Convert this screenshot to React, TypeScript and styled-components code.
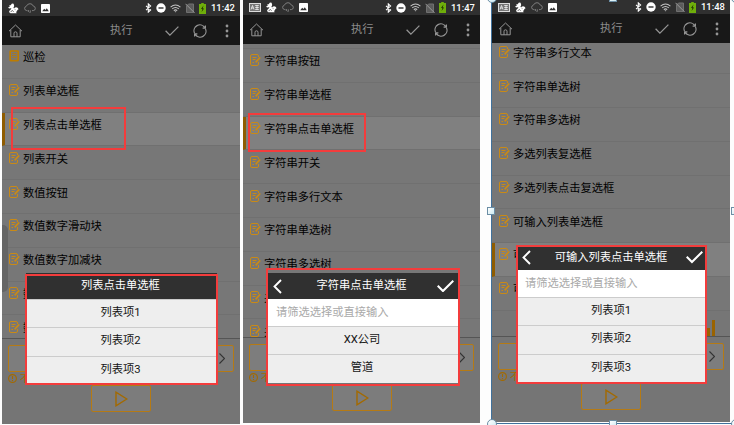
import React from "react";
import styled, { createGlobalStyle } from "styled-components";

const GlobalStyle = createGlobalStyle`
  * { box-sizing: border-box; }
  body {
    margin: 0;
    background: #fff;
    overflow: hidden;
    font-family: Roboto, "Noto Sans CJK SC", sans-serif;
    font-size: 11.25px;
  }
  svg { display: block; flex: none; }
`;

const Page = styled.main`
  position: relative;
  width: 734px;
  height: 425px;
  overflow: hidden;
  display: flex;
  align-items: flex-start;
  padding-left: 2px;
  background: #fdfdfd;
`;

const Phone = styled.section<{ $h: number; $w: number; $gap: number }>`
  position: relative;
  flex: none;
  width: ${(p) => p.$w}px;
  height: ${(p) => p.$h}px;
  margin-right: ${(p) => p.$gap}px;
  display: flex;
  flex-direction: column;
  background: #767676;
`;

const StatusBar = styled.header<{ $h: number }>`
  flex: none;
  height: ${(p) => p.$h}px;
  display: flex;
  align-items: center;
  justify-content: space-between;
  padding: 0 5px 0 6px;
  background: #303030;
  color: #fff;
`;

const Notices = styled.div`
  display: flex;
  align-items: center;
  gap: 5px;
`;

const Signals = styled.div`
  display: flex;
  align-items: center;
  gap: 4px;
`;

const Clock = styled.span`
  width: 24px;
  margin-left: 1px;
  font-size: 9.4px;
  font-weight: 500;
  line-height: 14px;
  white-space: nowrap;
`;

const AppBar = styled.nav<{ $h: number }>`
  flex: none;
  height: ${(p) => p.$h}px;
  display: grid;
  grid-template-columns: 108px 55px 28px 32px 10px;
  align-items: center;
  background: #181818;
  color: #959595;
`;

const HomeSlot = styled.div`
  padding-left: 6px;
`;

const BarTitle = styled.h1`
  margin: 0;
  color: #8c8c8c;
  font-size: 11.25px;
  font-weight: 400;
  line-height: 14px;
`;

const List = styled.div`
  flex: 1;
  min-height: 0;
  overflow: hidden;
`;

const Rows = styled.ul<{ $shift: number }>`
  list-style: none;
  margin: ${(p) => p.$shift}px 0 0;
  padding: 0;
`;

const Row = styled.li<{ $active?: boolean }>`
  height: 33.8px;
  display: flex;
  align-items: flex-start;
  gap: 3px;
  padding: 5.4px 0 0 ${(p) => (p.$active ? 4 : 7)}px;
  border-left: ${(p) => (p.$active ? "3px solid #8f5c00" : "0")};
  border-bottom: 1px solid #707070;
  background: ${(p) => (p.$active ? "#808080" : "#777")};
  color: #000;
  line-height: 16px;
  white-space: nowrap;
`;

const Footer = styled.footer`
  flex: none;
  height: 86px;
  border-top: 1px solid #555;
  padding: 6px 6px 0;
  background: #757575;
  color: #a36a00;
`;

const StepBox = styled.div`
  height: 27px;
  display: flex;
  align-items: center;
  justify-content: flex-end;
  padding-right: 8px;
  border: 1px solid #b57a14;
  border-radius: 2px;
  background: #7d7d7d;
  color: #333;
`;

const Hint = styled.div`
  height: 13px;
  display: flex;
  align-items: center;
  gap: 3px;
  font-size: 10px;
  line-height: 12px;
`;

const PlayButton = styled.button`
  width: 60px;
  height: 27px;
  margin: 0 0 0 83px;
  padding: 0;
  display: flex;
  align-items: center;
  justify-content: center;
  border: 1px solid #b57a14;
  border-radius: 2px;
  background: #7c7c7c;
  color: #a36a00;
`;

const Dialog = styled.div<{ $x: number; $y: number; $w: number }>`
  position: absolute;
  left: ${(p) => p.$x}px;
  top: ${(p) => p.$y}px;
  width: ${(p) => p.$w}px;
  background: #eee;
`;

const DialogHead = styled.div<{ $h: number; $filter?: boolean }>`
  height: ${(p) => p.$h}px;
  padding: ${(p) => (p.$filter ? "0 4px 0 5px" : "0 2px 0 0")};
  display: flex;
  align-items: center;
  background: #303030;
  color: #fff;
  line-height: 16px;
`;

const DialogTitle = styled.div<{ $nudge: number }>`
  flex: 1;
  padding-left: ${(p) => p.$nudge}px;
  text-align: center;
`;

const Filter = styled.div`
  height: 27px;
  padding: 0 8px;
  background: #fff;
  color: #a9a9a9;
  line-height: 27px;
`;

const Option = styled.div`
  height: 28.4px;
  padding-right: 2px;
  border-top: 1px solid #ccc;
  color: #151515;
  text-align: center;
  line-height: 26px;
`;

const Mark = styled.div<{ $x: number; $y: number; $w: number; $h: number }>`
  position: absolute;
  left: ${(p) => p.$x}px;
  top: ${(p) => p.$y}px;
  width: ${(p) => p.$w}px;
  height: ${(p) => p.$h}px;
  border: 2px solid #f33c3c;
`;

const Grip = styled.div`
  position: absolute;
  left: 0;
  top: 225px;
  width: 6px;
  height: 67px;
  border-radius: 0 5px 5px 0;
  background: #656565;
`;

const Bars = styled.svg`
  position: absolute;
  left: 213px;
  top: 320px;
`;

const SelectionEdge = styled.div<{ $side: "left" | "bottom" }>`
  position: absolute;
  background: #40719c;
  ${(p) =>
    p.$side === "left"
      ? "left: 491px; top: 0; width: 1px; height: 424px;"
      : "left: 491px; top: 423px; width: 243px; height: 1px;"}
`;

const Handle = styled.i<{ $x: number; $y: number; $round?: boolean }>`
  position: absolute;
  left: ${(p) => p.$x}px;
  top: ${(p) => p.$y}px;
  width: ${(p) => (p.$round ? 10 : 8)}px;
  height: ${(p) => (p.$round ? 10 : 8)}px;
  border: 1px solid #6c8ea5;
  border-radius: ${(p) => (p.$round ? "50%" : "0")};
  background: linear-gradient(135deg, #fff, #cdeaf1);
`;

const HomeIcon = () => (
  <svg width="15" height="14" viewBox="0 0 15 14" fill="none" stroke="currentColor" strokeWidth="1">
    <path d="M1 7.2 7.5 1 14 7.2M2.8 6v6.8h9.4V6M6 12.8V9.2q0-1.4 1.5-1.4T9 9.2v3.6" strokeLinejoin="round" />
  </svg>
);
const CheckIcon = ({ w = 14, s = 1.3 }: { w?: number; s?: number }) => (
  <svg width={w} height={(w * 10) / 14} viewBox="0 0 14 10" fill="none" stroke="currentColor" strokeWidth={s}>
    <path d="M.6 4.8 4.9 9.1 13.4.6" />
  </svg>
);
const RefreshIcon = () => (
  <svg width="14" height="14" viewBox="0 0 14 14" fill="none" stroke="currentColor" strokeWidth="1.2">
    <path d="M1.5 9A5.8 5.8 0 0 1 11.6 3.4M12.5 5A5.8 5.8 0 0 1 2.4 10.6M12.4 1.4v2.8H9.6M1.6 12.6V9.8h2.8" />
  </svg>
);
const DotsIcon = () => (
  <svg width="4" height="14" viewBox="0 0 4 14" fill="currentColor">
    <circle cx="2" cy="2" r="1.4" />
    <circle cx="2" cy="7" r="1.4" />
    <circle cx="2" cy="12" r="1.4" />
  </svg>
);
const EditIcon = () => (
  <svg width="11" height="12" viewBox="0 0 11 12" fill="none" stroke="#c98a16" strokeWidth="1">
    <path d="M8.5 3V2Q8.5.5 7 .5H2Q.5.5.5 2v8q0 1.5 1.5 1.5h5q1.5 0 1.5-1.5V8M2.5 3.5h4M2.5 5.5h3M2.5 8.5H4" />
    <path d="M5.6 8.4 10.2 3.4" strokeWidth="1.7" />
  </svg>
);
const FormIcon = () => (
  <svg width="11" height="12" viewBox="0 0 11 12" fill="none" stroke="#bd7c00">
    <rect x="1.2" y="1" width="8" height="9.6" rx=".5" strokeWidth="1.7" />
    <path d="M3 3.5h4.5M3 5.5h4.5M3 7.5h4.5" strokeWidth=".8" />
  </svg>
);
const TextNoticeIcon = () => (
  <svg width="12" height="9" viewBox="0 0 12 9">
    <rect x=".5" y=".5" width="11" height="8" fill="#777" stroke="#ddd" />
    <path d="M2 6.5 3.5 2.5 5 6.5M2.4 5h2M6.2 2.5h3.6M6.2 4.5h3.6M6.2 6.5h3.6M8 2.5v4" stroke="#fff" strokeWidth=".7" fill="none" />
  </svg>
);
const SquirrelIcon = () => (
  <svg width="11" height="11" viewBox="0 0 11 11" fill="#fff">
    <path d="M4 .5 5.6.8 6.2 3 5.4 5 6 5.2Q8 3.4 9.6 4.8L10.6 6.2 9.3 7 9 8.4 8 8.4 8.6 10.3H2.4Q.6 9.4 1.2 8L3.4 5.8 3 5.2 1 5.4.2 4.2 2 3.4 1 2.4 2.6 2.2Z" />
    <path d="M4.2 7.2 5.6 8.8M6.6 6.2l.8.4M2.6 8.6 4 8" stroke="#303030" strokeWidth=".7" fill="none" />
  </svg>
);
const CloudIcon = () => (
  <svg width="12" height="11" viewBox="0 0 12 11" fill="none" stroke="#858585" strokeWidth=".9">
    <path d="M3.5 7.6H2.8Q.6 7.3.6 5.3.7 3.6 2.4 3.2 3.3.7 6 .7q2.4 0 3.2 2.3 2.1.3 2.1 2.4 0 2-2 2.2H8M4.8 7l-.6 2M6.5 7.5 5.9 10" />
  </svg>
);
const ImageIcon = () => (
  <svg width="9" height="9" viewBox="0 0 9 9">
    <rect width="9" height="9" rx=".8" fill="#fff" />
    <path d="m1.2 7.3 2-2.6L4.5 6l1.3-1.8 2 3.1Z" fill="#303030" />
  </svg>
);
const BluetoothIcon = () => (
  <svg width="7" height="10" viewBox="0 0 7 10" fill="none" stroke="#fff" strokeWidth="1.1">
    <path d="m1 2.8 4.6 4.1L3.3 9.1V.9l2.3 2.2L1 7.2" />
  </svg>
);
const DndIcon = () => (
  <svg width="10" height="10" viewBox="0 0 10 10">
    <circle cx="5" cy="5" r="4.7" fill="#fff" />
    <path d="M2.5 5h5" stroke="#303030" strokeWidth="1.4" />
  </svg>
);
const WifiIcon = () => (
  <svg width="11" height="9" viewBox="0 0 11 9" fill="none" stroke="#c4c4c4" strokeWidth="1.1">
    <path d="M.6 3.1q4.9-4.2 9.8 0M2.2 4.9q3.3-2.8 6.6 0M3.8 6.6q1.7-1.4 3.4 0" />
    <path d="m4.5 7.3 1 1.2 1-1.2Z" fill="#bbb" stroke="none" />
  </svg>
);
const SimOffIcon = () => (
  <svg width="10" height="10" viewBox="0 0 10 10">
    <path d="M1.5 3 3.5 1h5v8.5h-7Z" fill="#5c5c5c" stroke="#707070" />
    <path d="m.5.8 9 9" stroke="#999" />
  </svg>
);
const BatteryIcon = () => (
  <svg width="7" height="11" viewBox="0 0 7 11">
    <path d="M2.2 0h2.6v1H7v10H0V1h2.2Z" fill="#6fae0b" />
    <path d="M4.5 2.5 2 6h1.4l-.8 3L5.1 5.4H3.7Z" fill="#203300" />
  </svg>
);
const BackIcon = () => (
  <svg width="9" height="15" viewBox="0 0 9 15" fill="none" stroke="#fff" strokeWidth="1.9">
    <path d="m8 1-6.5 6.5L8 14" />
  </svg>
);
const NextIcon = () => (
  <svg width="6" height="11" viewBox="0 0 6 11" fill="none" stroke="currentColor" strokeWidth="1.1">
    <path d="m.5.5 5 5-5 5" />
  </svg>
);
const HintIcon = () => (
  <svg width="9" height="9" viewBox="0 0 9 9" fill="none" stroke="currentColor" strokeWidth="1.1">
    <circle cx="4.5" cy="4.5" r="3.9" />
    <path d="M4.5 2v3M4.5 6v1" />
  </svg>
);
const PlayIcon = () => (
  <svg width="13" height="16" viewBox="0 0 13 16" fill="none" stroke="currentColor" strokeWidth="1.4">
    <path d="M1 1.2v13.6L11.8 8Z" />
  </svg>
);

type DialogData = {
  title: string;
  options: string[];
  filter?: boolean;
  x: number;
  y: number;
  w: number;
  head: number;
  nudge: number;
};

type Screen = {
  time: string;
  rows: string[];
  active: number;
  shift: number;
  width: number;
  height: number;
  status: number;
  bar: number;
  gap: number;
  dialog: DialogData;
};

const screens: Screen[] = [
  {
    time: "11:42",
    rows: ["巡检", "列表单选框", "列表点击单选框", "列表开关", "数值按钮", "数值数字滑动块", "数值数字加减块", "数", "数"],
    active: 2,
    shift: 0,
    width: 238,
    height: 424,
    status: 16,
    bar: 29,
    gap: 3,
    dialog: { title: "列表点击单选框", options: ["列表项1", "列表项2", "列表项3"], x: 24, y: 273, w: 191, head: 26, nudge: 0 },
  },
  {
    time: "11:47",
    rows: ["", "字符串按钮", "字符串单选框", "字符串点击单选框", "字符串开关", "字符串多行文本", "字符串单选树", "字符串多选树", "关", "关"],
    active: 3,
    shift: -28.8,
    width: 237,
    height: 423,
    status: 15,
    bar: 29,
    gap: 12,
    dialog: { title: "字符串点击单选框", options: ["XX公司", "管道"], filter: true, x: 25, y: 273, w: 190, head: 26, nudge: 4 },
  },
  {
    time: "11:48",
    rows: ["字符串多行文本", "字符串单选树", "字符串多选树", "多选列表复选框", "多选列表点击复选框", "可输入列表单选框", "可", "可"],
    active: 6,
    shift: -2.7,
    width: 238,
    height: 422,
    status: 14,
    bar: 29,
    gap: 0,
    dialog: { title: "可输入列表点击单选框", options: ["列表项1", "列表项2", "列表项3"], filter: true, x: 25, y: 245, w: 190, head: 25, nudge: 5 },
  },
];

function PhoneScreen({ data, index }: { data: Screen; index: number }) {
  const d = data.dialog;
  return (
    <Phone $w={data.width} $h={data.height} $gap={data.gap}>
      <StatusBar $h={data.status}>
        <Notices>
          {index > 0 && <TextNoticeIcon />}
          <SquirrelIcon />
          <CloudIcon />
          <ImageIcon />
        </Notices>
        <Signals>
          <BluetoothIcon />
          <DndIcon />
          <WifiIcon />
          <SimOffIcon />
          <BatteryIcon />
          <Clock>{data.time}</Clock>
        </Signals>
      </StatusBar>
      <AppBar $h={data.bar}>
        <HomeSlot><HomeIcon /></HomeSlot>
        <BarTitle>执行</BarTitle>
        <CheckIcon />
        <RefreshIcon />
        <DotsIcon />
      </AppBar>
      <List>
        <Rows $shift={data.shift}>
          {data.rows.map((name, i) => (
            <Row key={i} $active={i === data.active}>
              {name === "巡检" ? <FormIcon /> : name && <EditIcon />}
              {name}
            </Row>
          ))}
        </Rows>
      </List>
      <Footer>
        <StepBox><NextIcon /></StepBox>
        <Hint><HintIcon />不</Hint>
        <PlayButton aria-label="play"><PlayIcon /></PlayButton>
      </Footer>
      {index === 0 && <Grip />}
      {index === 2 && (
        <Bars width="12" height="17" fill="#9a6300">
          <rect x="2" y="8" width="3" height="8" />
          <rect x="7" y="0" width="3" height="16" />
        </Bars>
      )}
      <Dialog $x={d.x} $y={d.y} $w={d.w}>
        <DialogHead $h={d.head} $filter={d.filter}>
          {d.filter && <BackIcon />}
          <DialogTitle $nudge={d.nudge}>{d.title}</DialogTitle>
          {d.filter && <CheckIcon w={17} s={1.7} />}
        </DialogHead>
        {d.filter && <Filter>请筛选选择或直接输入</Filter>}
        {d.options.map((o) => <Option key={o}>{o}</Option>)}
      </Dialog>
    </Phone>
  );
}

export default function App() {
  return (
    <Page>
      <GlobalStyle />
      {screens.map((s, i) => <PhoneScreen key={s.time} data={s} index={i} />)}
      <Mark $x={11} $y={107} $w={115} $h={43} />
      <Mark $x={25} $y={274} $w={193} $h={111} />
      <Mark $x={248} $y={113} $w={118} $h={39} />
      <Mark $x={266} $y={268} $w={194} $h={118} />
      <Mark $x={516} $y={245} $w={191} $h={139} />
      <SelectionEdge $side="left" />
      <SelectionEdge $side="bottom" />
      <Handle $x={487} $y={-7} $round />
      <Handle $x={609} $y={-6} />
      <Handle $x={731} $y={-7} $round />
      <Handle $x={487} $y={207} />
      <Handle $x={731} $y={207} />
      <Handle $x={487} $y={419} $round />
      <Handle $x={609} $y={420} />
      <Handle $x={731} $y={419} $round />
    </Page>
  );
}
